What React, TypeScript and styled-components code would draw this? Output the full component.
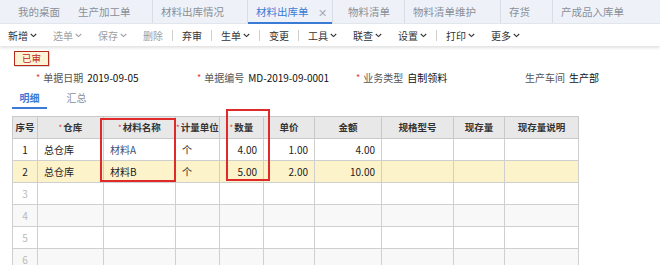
import React from "react";
import styled, { createGlobalStyle } from "styled-components";

const Global = createGlobalStyle`
  html, body { margin: 0; padding: 0; background: #fff; }
  body { font-family: "Noto Sans CJK SC", "Liberation Sans", sans-serif; font-size: 10px; color: #333; }
  * { box-sizing: border-box; }
`;

const Page = styled.div`
  width: 660px;
  height: 265px;
  overflow: hidden;
  position: relative;
  background: #fff;
`;

const TabBar = styled.div`
  display: flex;
  align-items: stretch;
  height: 24px;
  background: #eef2f8;
  border-bottom: 1px solid #e2e7ee;
  padding-left: 9px;
`;

const Tab = styled.div<{ $w: number; $pl?: number; $active?: boolean; $sep?: boolean }>`
  position: relative;
  display: flex;
  align-items: center;
  width: ${(p) => p.$w}px;
  padding-left: ${(p) => p.$pl ?? 8}px;
  font-size: 10.5px;
  color: ${(p) => (p.$active ? "#3a7bd5" : "#8a8f98")};
  border-left: 1px solid ${(p) => (p.$sep ? "#d8dde5" : "transparent")};
  white-space: nowrap;
  &::after {
    content: "";
    display: ${(p) => (p.$active ? "block" : "none")};
    position: absolute;
    left: 0;
    right: 0;
    bottom: -1px;
    height: 2px;
    background: #3a7bd5;
  }
`;

const Close = styled.span`
  margin-left: 9px;
  color: #a8adb5;
  font-size: 11px;
`;

const Toolbar = styled.div`
  display: flex;
  align-items: center;
  height: 22px;
  background: #fff;
  box-shadow: 0 2px 3px rgba(0, 0, 0, 0.12);
  position: relative;
`;

const ToolButton = styled.div<{ $disabled?: boolean }>`
  display: flex;
  align-items: center;
  padding: 0 8px;
  color: ${(p) => (p.$disabled ? "#a0a0a0" : "#333")};
  font-size: 10px;
  white-space: nowrap;
  svg { margin-left: 2px; }
`;

const ToolSep = styled.span`
  width: 1px;
  height: 11px;
  background: #cfcfcf;
  margin: 0 1px;
`;

const Body = styled.div`
  position: relative;
  padding-top: 4px;
`;

const Badge = styled.div`
  display: inline-flex;
  align-items: center;
  justify-content: center;
  margin-left: 14px;
  width: 35px;
  height: 15px;
  border: 1px solid #b52a1c;
  background: #fdf4d6;
  color: #c0281a;
  font-size: 9.5px;
  box-shadow: 1px 1px 0 rgba(0, 0, 0, 0.15);
`;

const FormRow = styled.div`
  display: flex;
  align-items: center;
  height: 20px;
  margin-top: 2px;
`;

const Field = styled.div<{ $w: number; $pl?: number }>`
  display: flex;
  align-items: center;
  width: ${(p) => p.$w}px;
  padding-left: ${(p) => p.$pl ?? 0}px;
  white-space: nowrap;
`;

const Star = styled.span`
  color: #e0383a;
  font-size: 9px;
  margin-right: 3px;
`;

const HeadStar = styled.span`
  color: #e0383a;
  font-size: 8px;
  margin-right: 1px;
  font-weight: 400;
`;

const Label = styled.span`
  color: #555;
  margin-right: 4px;
`;

const Value = styled.span`
  color: #111;
`;

const SubTabs = styled.div`
  display: flex;
  height: 20px;
  margin-left: 12px;
  margin-top: 1px;
`;

const SubTab = styled.div<{ $active?: boolean }>`
  display: flex;
  align-items: center;
  justify-content: center;
  width: 35px;
  margin-right: 12px;
  color: ${(p) => (p.$active ? "#3a7bd5" : "#8a8f98")};
  font-weight: ${(p) => (p.$active ? 700 : 400)};
  border-bottom: 2px solid ${(p) => (p.$active ? "#3a7bd5" : "transparent")};
`;

const TableWrap = styled.div`
  position: relative;
  margin-left: 12px;
  margin-top: 7px;
`;

const Table = styled.table`
  border-collapse: collapse;
  table-layout: fixed;
  width: 566px;
  font-size: 10px;
`;

const Th = styled.th`
  height: 22px;
  background: #e8e8e8;
  border: 1px solid #c9c9c9;
  font-weight: 700;
  font-size: 9.5px;
  color: #333;
  text-align: center;
  padding: 0;
  white-space: nowrap;
  overflow: hidden;
`;

const Tr = styled.tr<{ $bg: string }>`
  background: ${(p) => p.$bg};
`;

const Td = styled.td<{ $align?: string; $muted?: boolean; $color?: string; $pad?: number }>`
  height: 22px;
  border: 1px solid #cfcfcf;
  padding: 0 ${(p) => p.$pad ?? 6}px;
  text-align: ${(p) => p.$align ?? "left"};
  color: ${(p) => (p.$muted ? "#b8b8b8" : p.$color ?? "#222")};
  white-space: nowrap;
`;

const Highlight = styled.div<{ $l: number; $t: number; $w: number; $h: number }>`
  position: absolute;
  left: ${(p) => p.$l}px;
  top: ${(p) => p.$t}px;
  width: ${(p) => p.$w}px;
  height: ${(p) => p.$h}px;
  border: 2px solid #e02a2a;
  pointer-events: none;
`;

const Chevron = () => (
  <svg width="7" height="5" viewBox="0 0 7 5">
    <path d="M0.8 1 L3.5 3.6 L6.2 1" fill="none" stroke="currentColor" strokeWidth="1.1" />
  </svg>
);

const tabs = [
  { t: "我的桌面", w: 60 },
  { t: "生产加工单", w: 83 },
  { t: "材料出库情况", w: 95, sep: true },
  { t: "材料出库单", w: 85, sep: true, active: true },
  { t: "物料清单", w: 72, sep: true, pl: 15 },
  { t: "物料清单维护", w: 96, sep: true },
  { t: "存货", w: 52, sep: true },
  { t: "产成品入库单", w: 90, sep: true },
];

type Tool = { t: string; c?: boolean; d?: boolean } | "sep";
const tools: Tool[] = [
  { t: "新增", c: true },
  { t: "选单", c: true, d: true },
  { t: "保存", c: true, d: true },
  { t: "删除", d: true },
  "sep",
  { t: "弃审" },
  "sep",
  { t: "生单", c: true },
  "sep",
  { t: "变更" },
  "sep",
  { t: "工具", c: true },
  { t: "联查", c: true },
  { t: "设置", c: true },
  "sep",
  { t: "打印", c: true },
  { t: "更多", c: true },
];

const cols: { t: string; w: number; req?: boolean }[] = [
  { t: "序号", w: 25 },
  { t: "仓库", w: 66, req: true },
  { t: "材料名称", w: 72, req: true },
  { t: "计量单位", w: 44, req: true },
  { t: "数量", w: 44, req: true },
  { t: "单价", w: 51 },
  { t: "金额", w: 67 },
  { t: "规格型号", w: 72 },
  { t: "现存量", w: 51 },
  { t: "现存量说明", w: 74 },
];

const rows = [
  { wh: "总仓库", name: "材料A", unit: "个", qty: "4.00", price: "1.00", amt: "4.00", nameColor: "#3d4f78" },
  { wh: "总仓库", name: "材料B", unit: "个", qty: "5.00", price: "2.00", amt: "10.00" },
  null,
  null,
  null,
  null,
];

export default function App() {
  return (
    <Page>
      <Global />
      <TabBar>
        {tabs.map((tb, i) => (
          <Tab key={i} $w={tb.w} $pl={tb.pl} $active={tb.active} $sep={tb.sep}>
            {tb.t}
            {tb.active && <Close>✕</Close>}
          </Tab>
        ))}
      </TabBar>
      <Toolbar>
        {tools.map((tl, i) =>
          tl === "sep" ? (
            <ToolSep key={i} />
          ) : (
            <ToolButton key={i} $disabled={tl.d}>
              {tl.t}
              {tl.c && <Chevron />}
            </ToolButton>
          )
        )}
      </Toolbar>
      <Body>
        <Badge>已审</Badge>
        <FormRow>
          <Field $w={197} $pl={36}>
            <Star>*</Star>
            <Label>单据日期</Label>
            <Value>2019-09-05</Value>
          </Field>
          <Field $w={159}>
            <Star>*</Star>
            <Label>单据编号</Label>
            <Value>MD-2019-09-0001</Value>
          </Field>
          <Field $w={169}>
            <Star>*</Star>
            <Label>业务类型</Label>
            <Value>自制领料</Value>
          </Field>
          <Field $w={120}>
            <Label>生产车间</Label>
            <Value>生产部</Value>
          </Field>
        </FormRow>
        <SubTabs>
          <SubTab $active>明细</SubTab>
          <SubTab>汇总</SubTab>
        </SubTabs>
        <TableWrap>
          <Table>
            <colgroup>
              {cols.map((c, i) => (
                <col key={i} style={{ width: c.w }} />
              ))}
            </colgroup>
            <thead>
              <tr>
                {cols.map((c, i) => (
                  <Th key={i}>
                    {c.req && <HeadStar>*</HeadStar>}
                    {c.t}
                  </Th>
                ))}
              </tr>
            </thead>
            <tbody>
              {rows.map((r, i) => (
                <Tr key={i} $bg={i === 1 ? "#fdf3cb" : i % 2 === 1 ? "#f8f8f8" : "#fff"}>
                  <Td $align="center" $muted={!r} $pad={0}>
                    {i + 1}
                  </Td>
                  <Td>{r?.wh}</Td>
                  <Td $color={r?.nameColor}>{r?.name}</Td>
                  <Td>{r?.unit}</Td>
                  <Td $align="right">{r?.qty}</Td>
                  <Td $align="right">{r?.price}</Td>
                  <Td $align="right">{r?.amt}</Td>
                  <Td />
                  <Td />
                  <Td />
                </Tr>
              ))}
            </tbody>
          </Table>
          <Highlight $l={88} $t={2} $w={76} $h={64} />
          <Highlight $l={214} $t={-7} $w={44} $h={72} />
        </TableWrap>
      </Body>
    </Page>
  );
}
